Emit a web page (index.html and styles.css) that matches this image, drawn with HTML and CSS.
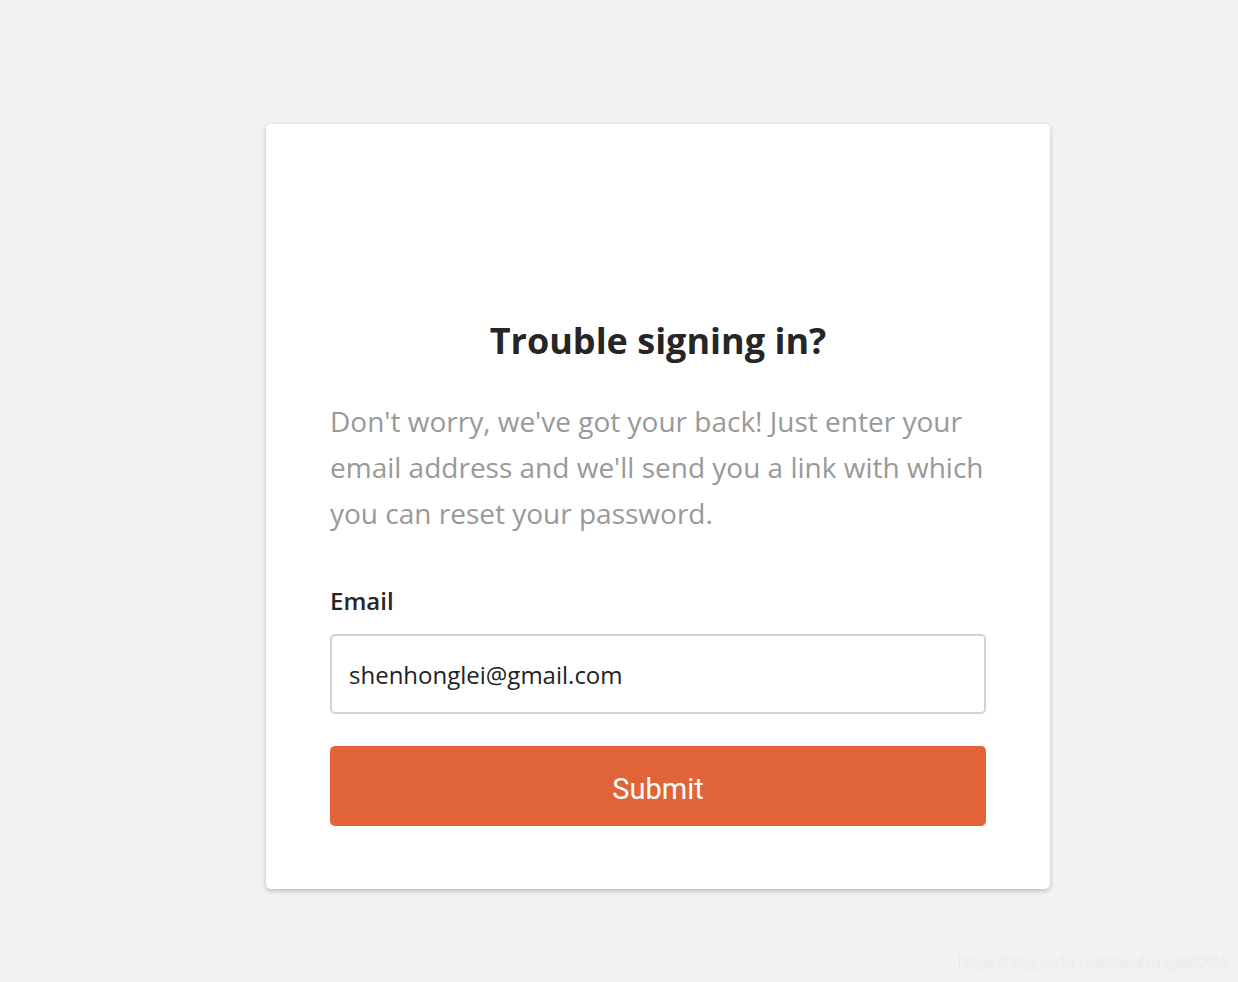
FILE: index.html
```html
<!DOCTYPE html>
<html lang="en">
<head>
<meta charset="utf-8">
<title>Trouble signing in?</title>
<link rel="stylesheet" href="styles.css">
</head>
<body>
<div class="page">
  <div class="card">
    <h1 class="title">Trouble signing in?</h1>
    <p class="lead">Don't worry, we've got your back! Just enter your email address and we'll send you a link with which you can reset your password.</p>
    <label class="label" for="email">Email</label>
    <div class="input"><span class="value">shenhonglei@gmail.com</span></div>
    <button class="submit" type="button">Submit</button>
  </div>
</div>
<div class="watermark">https://blog.csdn.net/shenhonglei1234</div>
</body>
</html>
```
FILE: styles.css
```css
html, body {
  margin: 0;
  padding: 0;
  background: #f2f2f2;
  height: 100%;
}
body {
  font-family: "Open Sans", "Liberation Sans", sans-serif;
  position: relative;
  overflow: hidden;
}
.page {
  padding: 124px 0 0 266px;
}
.card {
  width: 784px;
  height: 765px;
  box-sizing: border-box;
  background: #fff;
  border-radius: 5px;
  box-shadow: 0 2px 5px rgba(0, 0, 0, 0.22);
  padding: 195px 64px 0 64px;
  display: flex;
  flex-direction: column;
}
.title {
  margin: 0;
  font-size: 36px;
  line-height: 44px;
  font-weight: 700;
  color: #262626;
  text-align: center;
}
.lead {
  margin: 35px 0 0 0;
  font-size: 28px;
  line-height: 46px;
  color: #999;
  font-weight: 400;
}
.label {
  margin-top: 50px;
  font-size: 24px;
  line-height: 30px;
  font-weight: 600;
  color: #262626;
}
.input {
  margin-top: 18px;
  height: 80px;
  box-sizing: border-box;
  border: 2px solid #d3d3d3;
  border-radius: 5px;
  display: flex;
  align-items: center;
  padding-left: 17px;
}
.value {
  font-size: 24px;
  color: #222;
}
.submit {
  margin-top: 32px;
  height: 80px;
  border: none;
  border-radius: 5px;
  background: #e06437;
  color: #fff;
  font-family: Roboto, "Liberation Sans", sans-serif;
  font-size: 29px;
  padding: 5px 0 0 0;
}
.watermark {
  position: absolute;
  right: 10px;
  top: 954px;
  font-family: "Liberation Sans", Arial, sans-serif;
  font-size: 16px;
  color: #f5f5f5;
  text-shadow: 0 0 1px rgba(0,0,0,0.15);
}
```
